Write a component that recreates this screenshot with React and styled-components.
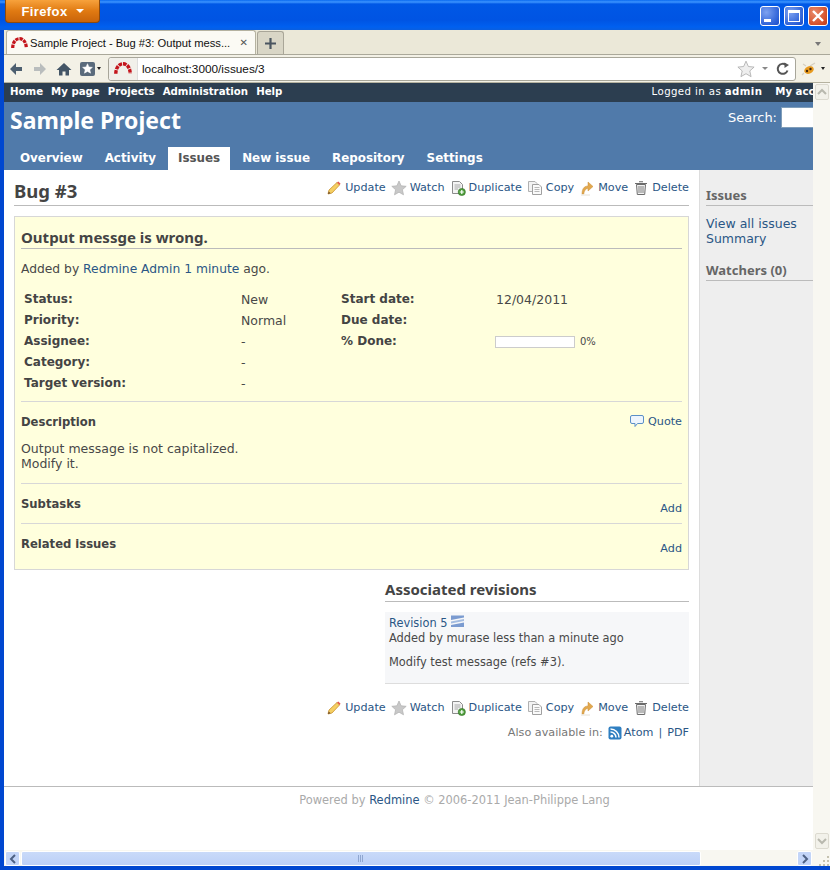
import React from 'react';
import styled, { createGlobalStyle } from 'styled-components';

const linkColor = '#2a5685';
const textColor = '#484848';
const headingFont = '"Noto Sans", "DejaVu Sans", sans-serif';
const bodyFont = '"DejaVu Sans", Verdana, sans-serif';
const chromeFont = '"Liberation Sans", Arial, sans-serif';

const GlobalStyle = createGlobalStyle`
    html, body {
        margin: 0;
        padding: 0;
        width: 830px;
        height: 870px;
        overflow: hidden;
        background: #0054e3;
    }
    * {
        box-sizing: border-box;
    }
`;

const RedmineLogo = ({ size = 20 }) => (
    <svg width={size} height={size * 0.7} viewBox="0 0 20 14">
        <path d="M2 13 C2 7 5 2 10 2 C15 2 18 7 18 13" fill="none" stroke="#c4141c" strokeWidth="3.8" strokeDasharray="4 1" />
    </svg>
);

const PencilIcon = () => (
    <svg width="16" height="16" viewBox="0 0 16 16">
        <path d="M2 14 L3 10 L11 2.5 L13.5 5 L6 13 Z" fill="#f5cf63" stroke="#c9922e" strokeWidth="0.8" />
        <path d="M11 2.5 L12.3 1.4 L14.6 3.8 L13.5 5 Z" fill="#e2574c" />
        <path d="M2 14 L2.7 11.5 L4.6 13.2 Z" fill="#6b4a2a" />
    </svg>
);

const StarIcon = ({ size = 16, color = '#c8c8c8', stroke = '#b0b0b0' }) => (
    <svg width={size} height={size} viewBox="0 0 16 16">
        <path d="M8 1 L10.1 5.8 L15.2 6.3 L11.4 9.7 L12.5 14.8 L8 12.2 L3.5 14.8 L4.6 9.7 L0.8 6.3 L5.9 5.8 Z" fill={color} stroke={stroke} strokeWidth="0.7" />
    </svg>
);

const DuplicateIcon = () => (
    <svg width="16" height="16" viewBox="0 0 16 16">
        <path d="M2.5 1.5 H9.5 L12.5 4.5 V13.5 H2.5 Z" fill="#f4f4f4" stroke="#8c8c8c" />
        <path d="M4.5 5 H10.5 M4.5 7 H10.5 M4.5 9 H8" stroke="#a8a8a8" />
        <circle cx="11.8" cy="12" r="3.6" fill="#4f9e3c" stroke="#2f6d22" strokeWidth="0.6" />
        <path d="M9.8 12 H13.8 M11.8 10 V14" stroke="#fff" strokeWidth="1.2" />
    </svg>
);

const CopyIcon = () => (
    <svg width="16" height="16" viewBox="0 0 16 16">
        <path d="M1.5 1.5 H8 L10 3.5 V11.5 H1.5 Z" fill="#f2f2f2" stroke="#b0b0b0" />
        <path d="M5.5 4.5 H12 L14.5 7 V14.5 H5.5 Z" fill="#fafafa" stroke="#a0a0a0" />
        <path d="M7.5 7.5 H12.5 M7.5 9.5 H12.5 M7.5 11.5 H12.5" stroke="#b8b8b8" />
    </svg>
);

const MoveIcon = () => (
    <svg width="16" height="16" viewBox="0 0 16 16">
        <path d="M3 14 C3 9 5 6 9 6 V2 L14 6.5 L9 11 V8.5 C6.5 8.5 5 11 4.8 14 Z" fill="#e2a84e" stroke="#c98f38" strokeWidth="0.5" />
        <path d="M2 15 H11" stroke="#e4e0d6" strokeWidth="1" />
    </svg>
);

const TrashIcon = () => (
    <svg width="16" height="16" viewBox="0 0 16 16">
        <path d="M3.5 4.5 H12.5 L11.7 14.5 H4.3 Z" fill="#f2f2f2" stroke="#6c6c6c" />
        <path d="M2 3.5 H14 M6 1.8 H10" stroke="#6c6c6c" strokeWidth="1.1" />
        <path d="M6 6 V13 M8 6 V13 M10 6 V13" stroke="#808080" />
    </svg>
);

const CommentIcon = () => (
    <svg width="16" height="16" viewBox="0 0 16 16">
        <path d="M3 2.5 H13 Q14.5 2.5 14.5 4 V9 Q14.5 10.5 13 10.5 H8.5 L6 13.5 V10.5 H3 Q1.5 10.5 1.5 9 V4 Q1.5 2.5 3 2.5 Z" fill="#eef5fd" stroke="#5b8fc7" />
    </svg>
);

const FeedIcon = () => (
    <svg width="14" height="14" viewBox="0 0 14 14">
        <rect x="0.5" y="0.5" width="13" height="13" rx="2" fill="#2f7fc1" />
        <circle cx="3.8" cy="10.2" r="1.4" fill="#fff" />
        <path d="M2.5 6 A5.5 5.5 0 0 1 8 11.5 M2.5 3 A8.5 8.5 0 0 1 11 11.5" fill="none" stroke="#fff" strokeWidth="1.5" />
    </svg>
);

const RevisionIcon = () => (
    <svg width="13" height="12" viewBox="0 0 13 12">
        <path d="M0 0.5 H13 V2.5 L0 5 Z" fill="#7b9bd0" />
        <path d="M13 4 V6 L0 8.5 V6.5 Z" fill="#a4bce0" />
        <path d="M13 7.5 V12 H0 V10 Z" fill="#7b9bd0" />
    </svg>
);

const Chevron = ({ dir, color = '#4d6185' }) => {
    const paths = {
        left: 'M8 2 L4 6 L8 10',
        right: 'M4 2 L8 6 L4 10',
        up: 'M2 8 L6 4 L10 8',
        down: 'M2 4 L6 8 L10 4',
    };
    return (
        <svg width="12" height="12" viewBox="0 0 12 12">
            <path d={paths[dir]} fill="none" stroke={color} strokeWidth="2" />
        </svg>
    );
};

const actions = [
    { label: 'Update', icon: <PencilIcon /> },
    { label: 'Watch', icon: <StarIcon /> },
    { label: 'Duplicate', icon: <DuplicateIcon /> },
    { label: 'Copy', icon: <CopyIcon /> },
    { label: 'Move', icon: <MoveIcon /> },
    { label: 'Delete', icon: <TrashIcon /> },
];

const leftAttributes = [
    ['Status:', 'New'],
    ['Priority:', 'Normal'],
    ['Assignee:', '-'],
    ['Category:', '-'],
    ['Target version:', '-'],
];

const mainTabs = ['Overview', 'Activity', 'Issues', 'New issue', 'Repository', 'Settings'];
const topLinks = ['Home', 'My page', 'Projects', 'Administration', 'Help'];

const ContextualLinks = () => (
    <Contextual>
        {actions.map((action) => (
            <ActionLink key={action.label}>
                {action.icon}
                <span>{action.label}</span>
            </ActionLink>
        ))}
    </Contextual>
);

const App = () => (
    <Window>
        <GlobalStyle />
        <TitleBar>
            <FirefoxButton>Firefox <Caret /></FirefoxButton>
            <WindowButtons>
                <WindowButton><MinGlyph /></WindowButton>
                <WindowButton><MaxGlyph /></WindowButton>
                <WindowButton $close>
                    <svg width="14" height="14" viewBox="0 0 14 14">
                        <path d="M2 2 L12 12 M12 2 L2 12" stroke="#fff" strokeWidth="2.4" />
                    </svg>
                </WindowButton>
            </WindowButtons>
        </TitleBar>
        <Frame>
            <TabStrip>
                <BrowserTab>
                    <RedmineLogo size={17} />
                    <TabLabel>Sample Project - Bug #3: Output mess...</TabLabel>
                    <TabClose>✕</TabClose>
                </BrowserTab>
                <NewTab>
                    <svg width="13" height="13" viewBox="0 0 13 13">
                        <path d="M6.5 1 V12 M1 6.5 H12" stroke="#4a5560" strokeWidth="2.2" />
                    </svg>
                </NewTab>
                <TabListCaret />
            </TabStrip>
            <NavBar>
                <NavIcons>
                    <svg width="16" height="16" viewBox="0 0 16 16">
                        <path d="M8 2 L2 8 L8 14 V10 H14 V6 H8 Z" fill="#4d5f70" />
                    </svg>
                    <svg width="16" height="16" viewBox="0 0 16 16">
                        <path d="M8 2 L14 8 L8 14 V10 H2 V6 H8 Z" fill="#b9bdbd" />
                    </svg>
                    <svg width="16" height="16" viewBox="0 0 16 16">
                        <path d="M8 2 L15.5 9 H13 V14.5 H9.5 V10.5 H6.5 V14.5 H3 V9 H0.5 Z" fill="#435566" />
                    </svg>
                    <BookmarkButton>
                        <BookmarkBox><StarIcon size={11} color="#fff" stroke="#fff" /></BookmarkBox>
                        <SmallCaret />
                    </BookmarkButton>
                </NavIcons>
                <UrlBar>
                    <SiteBox><RedmineLogo size={18} /></SiteBox>
                    <UrlText>localhost:3000/issues/3</UrlText>
                    <StarIcon size={18} color="#eeeeee" stroke="#a8a8a8" />
                    <UrlCaret />
                    <svg width="14" height="14" viewBox="0 0 14 14">
                        <path d="M11.5 8.5 A5 5 0 1 1 10 3" fill="none" stroke="#555" strokeWidth="2" />
                        <path d="M8.5 0.5 L13 3 L8.5 6 Z" fill="#555" />
                    </svg>
                </UrlBar>
                <AddonButton>
                    <svg width="16" height="14" viewBox="0 0 16 14">
                        <ellipse cx="8" cy="8" rx="5" ry="3.6" fill="#e89b20" transform="rotate(-25 8 8)" />
                        <circle cx="6" cy="9" r="1.2" fill="#41260c" />
                        <circle cx="9.5" cy="7" r="1.2" fill="#41260c" />
                        <path d="M9 4 L14 1 M5 4 L2 2 M3 11 L1 13" stroke="#d4cfc0" strokeWidth="1.2" />
                    </svg>
                    <SmallCaret />
                </AddonButton>
            </NavBar>
            <PageArea>
                <Viewport>
                    <Page>
                        <TopMenu>
                            <TopLinks>
                                {topLinks.map((link) => <span key={link}>{link}</span>)}
                            </TopLinks>
                            <TopAccount>
                                <LoggedAs>Logged in as <b>admin</b></LoggedAs>
                                <span>My account</span>
                                <span>Sign out</span>
                            </TopAccount>
                        </TopMenu>
                        <Header>
                            <HeaderRow>
                                <ProjectTitle>Sample Project</ProjectTitle>
                                <QuickSearch>
                                    Search:
                                    <SearchInput />
                                </QuickSearch>
                            </HeaderRow>
                            <MainMenu>
                                {mainTabs.map((tab) => (
                                    <MainTab key={tab} $active={tab === 'Issues'}>{tab}</MainTab>
                                ))}
                            </MainMenu>
                        </Header>
                        <Body>
                            <Main>
                                <TitleRow>
                                    <IssueTitle>Bug #3</IssueTitle>
                                    <ContextualLinks />
                                </TitleRow>
                                <IssueBox>
                                    <Subject>Output messge is wrong.</Subject>
                                    <Author>
                                        Added by <Link>Redmine Admin</Link> <Link>1 minute</Link> ago.
                                    </Author>
                                    <Attributes>
                                        {leftAttributes.map(([label, value]) => (
                                            <React.Fragment key={label}>
                                                <AttrLabel>{label}</AttrLabel>
                                                <AttrValue>{value}</AttrValue>
                                                {label === 'Status:' && (
                                                    <>
                                                        <AttrLabel>Start date:</AttrLabel>
                                                        <AttrValue>12/04/2011</AttrValue>
                                                    </>
                                                )}
                                                {label === 'Priority:' && (
                                                    <>
                                                        <AttrLabel>Due date:</AttrLabel>
                                                        <AttrValue />
                                                    </>
                                                )}
                                                {label === 'Assignee:' && (
                                                    <>
                                                        <AttrLabel>% Done:</AttrLabel>
                                                        <ProgressCell>
                                                            <ProgressBar />
                                                            <ProgressText>0%</ProgressText>
                                                        </ProgressCell>
                                                    </>
                                                )}
                                                {label !== 'Status:' && label !== 'Priority:' && label !== 'Assignee:' && (
                                                    <>
                                                        <span />
                                                        <span />
                                                    </>
                                                )}
                                            </React.Fragment>
                                        ))}
                                    </Attributes>
                                    <Section $height={82}>
                                        <SectionHead>
                                            <SectionTitle>Description</SectionTitle>
                                            <QuoteLink>
                                                <CommentIcon />
                                                <span>Quote</span>
                                            </QuoteLink>
                                        </SectionHead>
                                        <Description>
                                            Output message is not capitalized.<br />Modify it.
                                        </Description>
                                    </Section>
                                    <Section $height={40}>
                                        <SectionHead>
                                            <SectionTitle>Subtasks</SectionTitle>
                                            <AddLink>Add</AddLink>
                                        </SectionHead>
                                    </Section>
                                    <Section $height={46}>
                                        <SectionHead>
                                            <SectionTitle>Related issues</SectionTitle>
                                            <AddLink>Add</AddLink>
                                        </SectionHead>
                                    </Section>
                                </IssueBox>
                                <Revisions>
                                    <RevisionsTitle>Associated revisions</RevisionsTitle>
                                    <Changeset>
                                        <div>
                                            <Link>Revision 5</Link> <RevisionIcon />
                                        </div>
                                        <div>Added by murase less than a minute ago</div>
                                        <ChangesetMessage>Modify test message (refs #3).</ChangesetMessage>
                                    </Changeset>
                                </Revisions>
                                <BottomLinks>
                                    <ContextualLinks />
                                </BottomLinks>
                                <OtherFormats>
                                    Also available in:
                                    <FeedLink><FeedIcon /> <Link>Atom</Link></FeedLink>
                                    <Separator>|</Separator>
                                    <Link>PDF</Link>
                                </OtherFormats>
                            </Main>
                            <Sidebar>
                                <SideHeading>Issues</SideHeading>
                                <SideLinks>
                                    <Link>View all issues</Link>
                                    <Link>Summary</Link>
                                </SideLinks>
                                <SideHeading $spaced>Watchers (0)</SideHeading>
                            </Sidebar>
                        </Body>
                        <Footer>
                            Powered by&nbsp;<Link>Redmine</Link>&nbsp;© 2006-2011 Jean-Philippe Lang
                        </Footer>
                    </Page>
                </Viewport>
                <VerticalBar>
                    <ScrollEnd><Chevron dir="up" color="#b8b8ae" /></ScrollEnd>
                    <ScrollEnd><Chevron dir="down" color="#b8b8ae" /></ScrollEnd>
                </VerticalBar>
            </PageArea>
            <HorizontalBar>
                <ArrowButton><Chevron dir="left" /></ArrowButton>
                <Thumb><Grip /></Thumb>
                <ArrowButton><Chevron dir="right" /></ArrowButton>
                <Corner>
                    <svg width="12" height="12" viewBox="0 0 12 12">
                        <path d="M9 2 H11 V4 H9 Z M9 6 H11 V8 H9 Z M9 10 H11 V12 H9 Z M5 6 H7 V8 H5 Z M5 10 H7 V12 H5 Z M1 10 H3 V12 H1 Z" fill="#c5c2b0" />
                    </svg>
                </Corner>
            </HorizontalBar>
        </Frame>
    </Window>
);

export default App;


const Window = styled.div`
    display: flex;
    flex-direction: column;
    width: 830px;
    height: 870px;
    background: #0047d0;
    font-family: ${bodyFont};
    font-size: 12.5px;
    color: ${textColor};
`;

const TitleBar = styled.div`
    display: flex;
    flex: 0 0 30px;
    justify-content: space-between;
    padding: 0 2px 0 5px;
    background: linear-gradient(180deg, #0a6af0 0, #3d95ff 2px, #0058e6 4px, #0054e3 20px, #0060f0 27px, #0a5fe0 30px);
`;

const FirefoxButton = styled.div`
    display: flex;
    align-items: center;
    justify-content: center;
    gap: 8px;
    width: 95px;
    height: 23px;
    border: 1px solid #8a4a10;
    border-top: 0;
    border-radius: 0 0 4px 4px;
    background: linear-gradient(180deg, #f7a23c 0, #e07a12 50%, #c9640a 100%);
    color: #fff;
    font: bold 13px ${chromeFont};
    letter-spacing: 0.4px;
`;

const Caret = styled.span`
    width: 0;
    height: 0;
    border-left: 4px solid transparent;
    border-right: 4px solid transparent;
    border-top: 4px solid #fff;
`;

const WindowButtons = styled.div`
    display: flex;
    gap: 4px;
    padding-top: 6px;
`;

const WindowButton = styled.div`
    display: flex;
    align-items: center;
    justify-content: center;
    width: 20px;
    height: 20px;
    border: 1px solid #fff;
    border-radius: 3px;
    background: ${(p) => (p.$close
        ? 'radial-gradient(circle at 30% 30%, #e88a6a, #d4502a 70%, #b83a18)'
        : 'radial-gradient(circle at 30% 30%, #7ea2f0, #2f63d8 70%, #1c4cc8)')};
`;

const MinGlyph = styled.span`
    align-self: flex-end;
    width: 7px;
    height: 3px;
    margin: 0 5px 3px 0;
    background: #fff;
`;

const MaxGlyph = styled.span`
    width: 12px;
    height: 12px;
    border: 1px solid #fff;
    border-top-width: 3px;
`;

const Frame = styled.div`
    display: flex;
    flex: 1;
    flex-direction: column;
    min-height: 0;
    margin: 0 0 4px 4px;
    background: #ece9d8;
`;

const TabStrip = styled.div`
    position: relative;
    display: flex;
    flex: 0 0 25px;
    align-items: flex-end;
    padding-left: 2px;
    background: #ebe8d8;
    border-bottom: 1px solid #aaa89a;
`;

const BrowserTab = styled.div`
    display: flex;
    align-items: center;
    gap: 2px;
    width: 250px;
    height: 24px;
    padding: 0 7px 0 4px;
    border: 1px solid #b5b2a0;
    border-bottom: 0;
    border-radius: 3px 3px 0 0;
    background: #fbfaf4;
`;

const TabLabel = styled.span`
    flex: 1;
    min-width: 0;
    color: #111;
    font: 11.2px ${chromeFont};
    white-space: nowrap;
`;

const TabClose = styled.span`
    flex: none;
    color: #555;
    font: bold 10px ${bodyFont};
`;

const NewTab = styled.div`
    display: flex;
    align-items: center;
    justify-content: center;
    width: 27px;
    height: 23px;
    margin-left: 1px;
    border: 1px solid #a9a698;
    border-bottom: 0;
    border-radius: 3px 3px 0 0;
    background: #d9d6c6;
`;

const TabListCaret = styled.span`
    position: absolute;
    right: 9px;
    top: 12px;
    width: 0;
    height: 0;
    border-left: 3px solid transparent;
    border-right: 3px solid transparent;
    border-top: 4px solid #777;
`;

const NavBar = styled.div`
    display: flex;
    flex: 0 0 27px;
    align-items: center;
    padding-left: 4px;
    background: #f3f1e6;
`;

const NavIcons = styled.div`
    display: flex;
    align-items: center;
    gap: 8px;
    width: 100px;
`;

const BookmarkButton = styled.div`
    display: flex;
    align-items: center;
    gap: 2px;
`;

const BookmarkBox = styled.span`
    display: flex;
    align-items: center;
    justify-content: center;
    width: 15px;
    height: 14px;
    border-radius: 2px;
    background: #5a6b7c;
`;

const SmallCaret = styled.span`
    width: 0;
    height: 0;
    border-left: 2.5px solid transparent;
    border-right: 2.5px solid transparent;
    border-top: 3px solid #222;
`;

const UrlBar = styled.div`
    display: flex;
    align-items: center;
    width: 688px;
    height: 24px;
    padding-right: 5px;
    border: 1px solid #a8a69a;
    border-radius: 3px;
    background: #fff;
`;

const SiteBox = styled.span`
    display: flex;
    align-items: center;
    justify-content: center;
    width: 29px;
    height: 100%;
    border-right: 1px solid #ddd;
    border-radius: 3px 0 0 3px;
    background: #f1f0ea;
`;

const UrlText = styled.span`
    flex: 1;
    padding-left: 4px;
    color: #111;
    font: 11.8px ${chromeFont};
`;

const UrlCaret = styled.span`
    width: 0;
    height: 0;
    margin: 0 8px 0 7px;
    border-left: 3px solid transparent;
    border-right: 3px solid transparent;
    border-top: 3px solid #888;
`;

const AddonButton = styled.div`
    display: flex;
    align-items: center;
    gap: 4px;
    padding-left: 5px;
`;

const PageArea = styled.div`
    display: flex;
    flex: 1;
    min-height: 0;
    border-top: 1px solid #b5b2a0;
`;

const Viewport = styled.div`
    flex: 1;
    min-width: 0;
    overflow: hidden;
    background: #fff;
`;

const Page = styled.div`
    display: flex;
    flex-direction: column;
    width: 901px;
    height: 100%;
`;

const TopMenu = styled.div`
    display: flex;
    flex: 0 0 19px;
    align-items: center;
    justify-content: space-between;
    padding: 0 8px 2px 6px;
    background: #2c3e50;
    color: #fff;
    font: 10.2px ${bodyFont};
`;

const TopLinks = styled.div`
    display: flex;
    gap: 8px;
    font-weight: bold;
`;

const TopAccount = styled.div`
    display: flex;
    gap: 8px;
    font-weight: bold;
`;

const LoggedAs = styled.span`
    margin-right: 5px;
    font-weight: normal;
    letter-spacing: 0.4px;
`;

const Header = styled.div`
    display: flex;
    flex: 0 0 68px;
    flex-direction: column;
    justify-content: space-between;
    background: #507aaa;
    color: #fff;
`;

const HeaderRow = styled.div`
    display: flex;
    justify-content: space-between;
    padding: 1px 0 0 6px;
`;

const ProjectTitle = styled.h1`
    margin: 0;
    font: bold 23px/34px ${headingFont};
`;

const QuickSearch = styled.div`
    display: flex;
    gap: 4px;
    align-items: center;
    height: 26px;
    padding-top: 3px;
    font-size: 13px;
`;

const SearchInput = styled.div`
    width: 124px;
    height: 21px;
    border: 1px solid #7f9db9;
    background: #fff;
`;

const MainMenu = styled.div`
    display: flex;
    gap: 2px;
    padding-left: 6px;
`;

const MainTab = styled.div`
    padding: 0 10px;
    height: 23px;
    background: ${(p) => (p.$active ? '#fff' : 'transparent')};
    color: ${(p) => (p.$active ? '#555' : '#fff')};
    font: bold 11.9px/23px ${bodyFont};
`;

const Body = styled.div`
    display: flex;
    flex: 0 0 616px;
    min-height: 0;
`;

const Main = styled.div`
    flex: 0 0 695px;
    padding: 10px 10px 0;
`;

const TitleRow = styled.div`
    display: flex;
    justify-content: space-between;
    height: 26px;
    border-bottom: 1px solid #bbb;
`;

const IssueTitle = styled.h2`
    margin: 0;
    color: #444;
    font: bold 18.5px/22px ${headingFont};
`;

const Contextual = styled.div`
    display: flex;
    gap: 5px;
    height: 16px;
`;

const ActionLink = styled.span`
    display: flex;
    align-items: center;
    gap: 3px;
    color: ${linkColor};
    font-size: 11.2px;
    line-height: 16px;
`;

const IssueBox = styled.div`
    height: 354px;
    margin-top: 10px;
    padding: 6px 6px 0;
    border: 1px solid #d7d7d7;
    background: #ffd;
`;

const Subject = styled.h3`
    height: 26px;
    margin: 0;
    padding-top: 3px;
    border-bottom: 1px solid #bbb;
    color: #444;
    font: bold 15px/22px ${headingFont};
`;

const Author = styled.p`
    margin: 13px 0 0;
    font-size: 12.3px;
    line-height: 15px;
`;

const Link = styled.span`
    color: ${linkColor};
`;

const Attributes = styled.div`
    display: grid;
    grid-template-columns: 217px 100px 155px 1fr;
    grid-auto-rows: 21px;
    margin-top: 14px;
    padding: 0 3px 5px;
    border-bottom: 1px solid #d7d7d7;
`;

const AttrLabel = styled.span`
    color: #444;
    font: bold 12px/17px ${bodyFont};
`;

const AttrValue = styled.span`
    line-height: 17px;
`;

const ProgressCell = styled.div`
    display: flex;
    align-items: center;
    gap: 5px;
    height: 17px;
    margin-left: -1px;
`;

const ProgressBar = styled.div`
    width: 80px;
    height: 12px;
    border: 1px solid #ccc;
    background: #fff;
`;

const ProgressText = styled.span`
    font-size: 10px;
`;

const Section = styled.div`
    height: ${(p) => p.$height}px;
    border-bottom: ${(p) => (p.$height === 46 ? '0' : '1px solid #d7d7d7')};
`;

const SectionHead = styled.div`
    display: flex;
    justify-content: space-between;
    padding-top: 12px;
`;

const SectionTitle = styled.span`
    color: #444;
    font: bold 11.6px/17px ${bodyFont};
`;

const QuoteLink = styled.span`
    display: flex;
    align-items: center;
    gap: 3px;
    height: 16px;
    margin-top: -1px;
    color: ${linkColor};
    font-size: 11.2px;
`;

const AddLink = styled.span`
    margin-top: 4px;
    color: ${linkColor};
    font-size: 11.2px;
    line-height: 17px;
`;

const Description = styled.p`
    margin: 10px 0 0;
    line-height: 15px;
`;

const Revisions = styled.section`
    width: 304px;
    margin: 10px 0 0 auto;
`;

const RevisionsTitle = styled.h3`
    height: 22px;
    margin: 0;
    border-bottom: 1px solid #bbb;
    color: #444;
    font: bold 15px/18px ${headingFont};
`;

const Changeset = styled.div`
    height: 72px;
    margin-top: 10px;
    padding: 3px 4px 0;
    border-bottom: 1px solid #ddd;
    background: #f6f7f9;
    font-size: 11.4px;
    line-height: 15px;
`;

const ChangesetMessage = styled.p`
    margin: 9px 0 0;
`;

const BottomLinks = styled.div`
    display: flex;
    justify-content: flex-end;
    margin-top: 16px;
`;

const OtherFormats = styled.div`
    display: flex;
    align-items: center;
    justify-content: flex-end;
    gap: 5px;
    margin-top: 9px;
    color: #777;
    line-height: 15px;
    font-size: 11.2px;
`;

const FeedLink = styled.span`
    display: flex;
    align-items: center;
    gap: 2px;
`;

const Separator = styled.span`
    color: ${linkColor};
`;

const Sidebar = styled.div`
    flex: 1;
    padding: 17px 0 0 6px;
    border-left: 1px solid #ddd;
    background: #eee;
`;

const SideHeading = styled.h3`
    height: 19px;
    margin: ${(p) => (p.$spaced ? '16px' : '0')} 0 0;
    border-bottom: 1px solid #bbb;
    color: #666;
    font: bold 13px/17px ${headingFont};
`;

const SideLinks = styled.div`
    display: flex;
    flex-direction: column;
    margin-top: 10px;
    font-size: 12.5px;
    line-height: 15px;
`;

const Footer = styled.div`
    display: flex;
    flex: 1;
    justify-content: center;
    padding-top: 5px;
    border-top: 1px solid #bbb;
    color: #aaa;
    font-size: 11.45px;
    line-height: 16px;
`;

const VerticalBar = styled.div`
    display: flex;
    flex: 0 0 17px;
    flex-direction: column;
    justify-content: space-between;
    padding: 1px 1px 1px 2px;
    background: #f8f7f1;
`;

const ScrollEnd = styled.div`
    display: flex;
    align-items: center;
    justify-content: center;
    height: 16px;
    border: 1px solid #dcdad0;
    border-radius: 2px;
    background: #f2f1ea;
`;

const HorizontalBar = styled.div`
    display: flex;
    flex: 0 0 16px;
    gap: 1px;
    padding: 1px 0 0 1px;
    background: #f8f7f1;
`;

const ArrowButton = styled.div`
    display: flex;
    align-items: center;
    justify-content: center;
    width: 15px;
    height: 15px;
    border: 1px solid #fff;
    border-radius: 2px;
    background: #c3d5f8;
`;

const Thumb = styled.div`
    display: flex;
    align-items: center;
    justify-content: center;
    width: 680px;
    margin-right: 95px;
    border: 1px solid #fff;
    border-radius: 2px;
    background: linear-gradient(180deg, #c9daf9, #bcd0f7);
`;

const Grip = styled.span`
    width: 6px;
    height: 7px;
    background: repeating-linear-gradient(90deg, #8fa6d0 0 1px, transparent 1px 2px);
`;

const Corner = styled.div`
    flex: 1;
    display: flex;
    align-items: flex-end;
    justify-content: flex-end;
`;
